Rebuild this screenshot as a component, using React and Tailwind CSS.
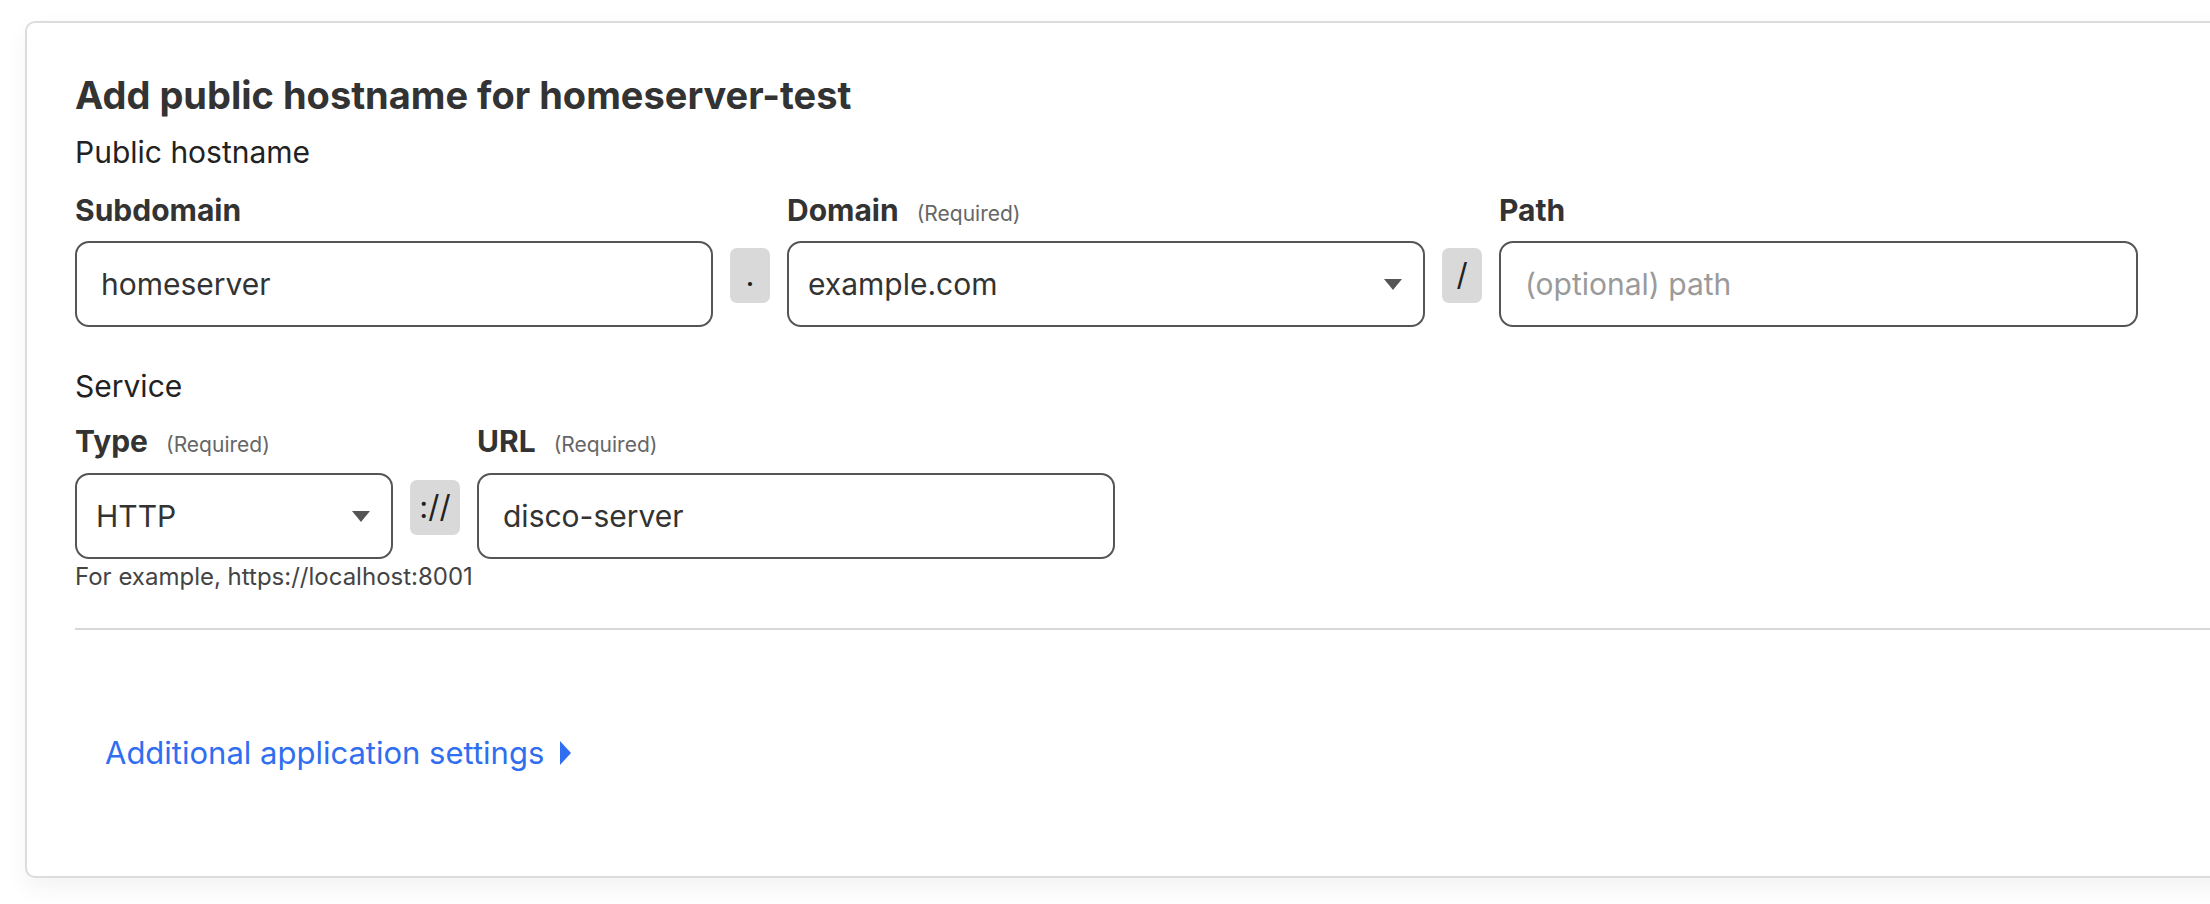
import React from 'react';

const font = { fontFamily: 'Inter, "Noto Sans", "Liberation Sans", sans-serif' };

const Caret = () => (
  <svg width="18" height="11" viewBox="0 0 18 11" className="shrink-0">
    <path d="M0 0 H18 L9 11 Z" fill="#555555" />
  </svg>
);

const FieldLabel = ({ children, required }) => (
  <div className="flex items-baseline gap-[18px] h-[36px] leading-[36px]">
    <span className="text-[30px] font-bold text-[#333333]">{children}</span>
    {required && <span className="text-[21px] text-[#666666]">(Required)</span>}
  </div>
);

const TextInput = ({ value, placeholder }) => (
  <div className="h-[86px] rounded-[14px] border-2 border-[#555555] bg-white flex items-center px-[24px]">
    <input
      type="text"
      readOnly
      defaultValue={value}
      placeholder={placeholder}
      className="w-full bg-transparent outline-none text-[30px] text-[#333333] placeholder:text-[#9a9a9a]"
    />
  </div>
);

const SelectBox = ({ value }) => (
  <div className="h-[86px] rounded-[14px] border-2 border-[#555555] bg-white flex items-center justify-between pl-[19px] pr-[21px]">
    <span className="text-[30px] text-[#333333]">{value}</span>
    <Caret />
  </div>
);

const Joiner = ({ children }) => (
  <div className="mt-[7px] h-[55px] rounded-[7px] bg-[#d9d9d9] flex items-center justify-center text-[31px] text-[#222222]">
    {children}
  </div>
);

export default function App() {
  return (
    <div style={font} className="min-h-screen bg-white overflow-hidden pt-[21px] pl-[25px]">
      <div className="w-[2240px] rounded-[10px] border-2 border-[#dcdcdc] bg-white shadow-[0_10px_24px_rgba(0,0,0,0.05)] pt-[50px] pl-[48px] pb-[105px]">
        <h1 className="text-[38px] leading-[44px] font-bold text-[#333333]">
          Add public hostname for homeserver-test
        </h1>

        <div className="mt-[17px] text-[30px] leading-[36px] text-[#222222]">Public hostname</div>

        {/* hostname row */}
        <div className="mt-[22px] grid grid-cols-[638px_40px_638px_40px_639px] gap-x-[17px] gap-y-[13px]">
          <FieldLabel>Subdomain</FieldLabel>
          <div />
          <FieldLabel required>Domain</FieldLabel>
          <div />
          <FieldLabel>Path</FieldLabel>

          <TextInput value="homeserver" />
          <Joiner>.</Joiner>
          <SelectBox value="example.com" />
          <Joiner>/</Joiner>
          <TextInput placeholder="(optional) path" />
        </div>

        <div className="mt-[41px] text-[30px] leading-[36px] text-[#222222]">Service</div>

        {/* service row */}
        <div className="mt-[19px] grid grid-cols-[318px_50px_638px] gap-x-[17px] gap-y-[14px]">
          <FieldLabel required>Type</FieldLabel>
          <div />
          <FieldLabel required>URL</FieldLabel>

          <SelectBox value="HTTP" />
          <Joiner>://</Joiner>
          <TextInput value="disco-server" />
        </div>

        <div className="mt-[3px] text-[24px] leading-[30px] text-[#444444]">
          For example, https://localhost:8001
        </div>

        <div className="mt-[36px] h-[2px] bg-[#d8d8d8]" />

        <button className="mt-[105px] ml-[30px] flex items-center gap-[16px] text-[31px] leading-[36px] text-[#2f6ef0]">
          <span>Additional application settings</span>
          <svg width="11" height="24" viewBox="0 0 11 24">
            <path d="M0 0 L11 12 L0 24 Z" fill="#2f6ef0" />
          </svg>
        </button>
      </div>
    </div>
  );
}
